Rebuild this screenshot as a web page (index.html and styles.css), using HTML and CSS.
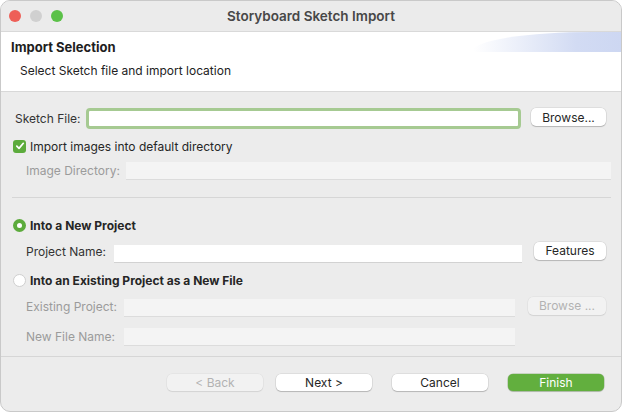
FILE: index.html
```html
<!DOCTYPE html>
<html lang="en">
<head>
    <meta charset="UTF-8">
    <title>Storyboard Sketch Import</title>
    <link rel="stylesheet" href="styles.css">
</head>
<body>
    <div class="window">
        <div class="titlebar">
            <div class="lights">
                <span class="light red"></span>
                <span class="light grey"></span>
                <span class="light green"></span>
            </div>
            <div class="title">Storyboard Sketch Import</div>
        </div>

        <div class="banner">
            <div class="banner-title">Import Selection</div>
            <div class="banner-sub">Select Sketch file and import location</div>
            <div class="streak"></div>
        </div>

        <div class="content">
            <div class="row row-sketch">
                <label class="lbl w-sketch">Sketch File:</label>
                <div class="field focused"></div>
                <button class="btn btn-browse">Browse...</button>
            </div>

            <div class="row row-check">
                <span class="checkbox">
                    <svg width="10" height="10" viewBox="0 0 10 10"><path d="M1.8 5.2 L4 7.4 L8.3 2.3" fill="none" stroke="#fff" stroke-width="1.7" stroke-linecap="round" stroke-linejoin="round"/></svg>
                </span>
                <span class="opt">Import images into default directory</span>
            </div>

            <div class="row row-imgdir">
                <label class="lbl dim w-imgdir">Image Directory:</label>
                <div class="field disabled"></div>
            </div>

            <div class="sep"></div>

            <div class="row row-radio1">
                <span class="radio on"></span>
                <span class="opt bold">Into a New Project</span>
            </div>

            <div class="row row-project">
                <label class="lbl w-project">Project Name:</label>
                <div class="field plain"></div>
                <button class="btn btn-features">Features</button>
            </div>

            <div class="row row-radio2">
                <span class="radio"></span>
                <span class="opt bold">Into an Existing Project as a New File</span>
            </div>

            <div class="row row-existing">
                <label class="lbl dim w-existing">Existing Project:</label>
                <div class="field disabled"></div>
                <button class="btn btn-browse2" disabled>Browse ...</button>
            </div>

            <div class="row row-newfile">
                <label class="lbl dim w-existing">New File Name:</label>
                <div class="field disabled"></div>
            </div>
        </div>

        <div class="footer">
            <button class="btn wide" disabled>&lt; Back</button>
            <button class="btn wide next">Next &gt;</button>
            <button class="btn wide cancel">Cancel</button>
            <button class="btn wide finish">Finish</button>
        </div>
    </div>
</body>
</html>
```

FILE: styles.css
```css
body {
    margin: 0;
    background: #fff;
    font-family: Inter, "Noto Sans", "Liberation Sans", sans-serif;
    font-size: 12px;
    color: #2b2b2b;
}
.window {
    width: 620px;
    height: 410px;
    border: 1px solid #c9c9c9;
    border-radius: 10px;
    overflow: hidden;
    background: #ececec;
    display: flex;
    flex-direction: column;
}
.titlebar {
    height: 30px;
    border-bottom: 1px solid #d9d9d9;
    background: #ebebeb;
    display: flex;
    align-items: center;
    position: relative;
}
.lights {
    display: flex;
    gap: 9px;
    padding-left: 8px;
}
.light {
    width: 12px;
    height: 12px;
    border-radius: 50%;
}
.red { background: #ee5f57; }
.grey { background: #d0d0d0; }
.green { background: #5bc148; }
.title {
    position: absolute;
    left: 0;
    right: 0;
    text-align: center;
    font-size: 13.5px;
    font-weight: 600;
    color: #474747;
}
.banner {
    height: 59px;
    background: #fff;
    border-bottom: 1px solid #d8d8d8;
    position: relative;
}
.banner-title {
    padding: 7px 0 0 10px;
    font-size: 13px;
    font-weight: 700;
    color: #1e1e1e;
}
.banner-sub {
    padding: 8px 0 0 19px;
    color: #222;
}
.streak {
    position: absolute;
    right: 0;
    top: 0;
    width: 148px;
    height: 20px;
    border-top-left-radius: 120px 19px;
    background: linear-gradient(to right, rgba(214, 222, 245, 0), #d2dbf3 70%, #cdd7f2);
}
.content {
    display: flex;
    flex-direction: column;
}
.row {
    display: flex;
    align-items: center;
}
.lbl {
    flex-shrink: 0;
    color: #333;
}
.lbl.dim { color: #9b9b9b; }
.field {
    flex: 1;
    box-sizing: border-box;
}
.field.focused {
    height: 21px;
    background: #fff;
    border: 3px solid #a6ca92;
    border-radius: 4px;
}
.field.plain {
    height: 17px;
    background: #fff;
    box-shadow: 0 1px 0 #d2d2d2;
}
.field.disabled {
    height: 17px;
    background: #f4f4f4;
    box-shadow: 0 1px 0 #dcdcdc;
}
.btn {
    font-family: inherit;
    font-size: 12px;
    color: #262626;
    background: #fff;
    border: none;
    border-radius: 5px;
    height: 18px;
    padding: 0;
    box-shadow: 0 0 0 0.5px rgba(0, 0, 0, 0.12), 0 1px 1px rgba(0, 0, 0, 0.18);
}
.btn:disabled {
    background: #f2f2f2;
    color: #b2b2b2;
    box-shadow: 0 0 0 0.5px rgba(0, 0, 0, 0.06), 0 1px 1px rgba(0, 0, 0, 0.08);
}

.row-sketch { margin-top: 16px; height: 21px; padding: 0 15px 0 14px; }
.w-sketch { width: 71px; }
.btn-browse { width: 75px; margin-left: 10px; margin-bottom: 3px; }

.row-check { margin-top: 10px; height: 14px; padding-left: 12px; }
.checkbox {
    width: 13px;
    height: 13px;
    border-radius: 3px;
    background: #5cab3c;
    display: flex;
    align-items: center;
    justify-content: center;
    margin-right: 4px;
}
.opt { color: #262626; }
.opt.bold { font-weight: 700; }

.row-imgdir { margin-top: 9px; height: 17px; padding: 0 10px 0 25px; }
.w-imgdir { width: 100px; }

.sep {
    margin: 18px 10px 0 11px;
    height: 1px;
    background: #d6d6d6;
}

.row-radio1 { margin-top: 20px; height: 14px; padding-left: 12px; }
.radio {
    box-sizing: border-box;
    width: 13px;
    height: 13px;
    border-radius: 50%;
    background: #fff;
    border: 1px solid #cfcfcf;
    margin-right: 4px;
}
.radio.on {
    border: 4px solid #5cab3c;
}

.row-project { margin-top: 10px; height: 19px; padding: 0 15px 0 25px; }
.row-project .field { margin-top: 3px; }
.w-project { width: 88px; }
.btn-features { width: 72px; margin-left: 12px; margin-bottom: 2px; }

.row-radio2 { margin-top: 12px; height: 14px; padding-left: 12px; }

.row-existing { margin-top: 10px; height: 19px; padding: 0 15px 0 25px; }
.row-existing .field { margin-top: 2px; }
.w-existing { width: 98px; }
.btn-browse2 { width: 78px; margin-left: 13px; margin-bottom: 2px; }

.row-newfile { margin-top: 12px; height: 17px; padding: 0 106px 0 25px; }

.footer {
    margin-top: 11px;
    border-top: 1px solid #d6d6d6;
    display: flex;
    justify-content: flex-end;
    padding: 17px 17px 0 0;
    gap: 20px;
}
.btn.wide { width: 96px; height: 17px; }
.btn.next { margin-left: -7px; }
.btn.finish {
    background: #62af3e;
    color: #fff;
    box-shadow: 0 0 0 0.5px rgba(60, 120, 30, 0.4), 0 1px 1px rgba(0, 0, 0, 0.15);
}
```
